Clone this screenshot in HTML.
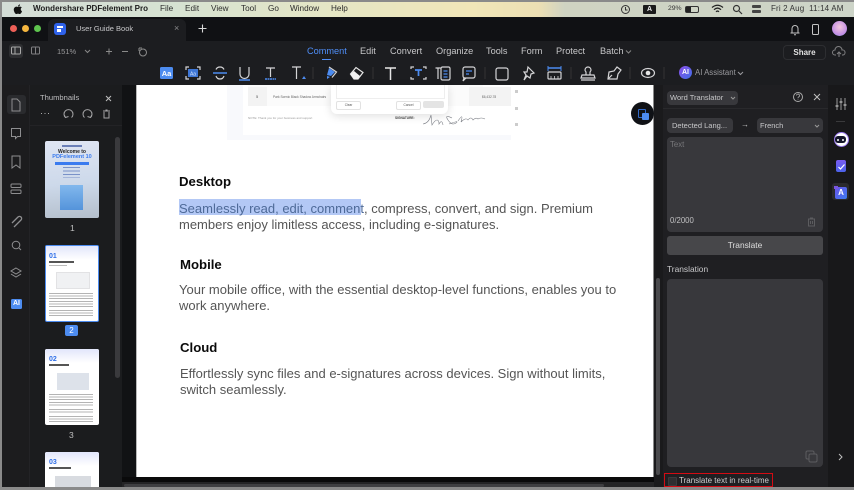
<!DOCTYPE html>
<html><head><meta charset="utf-8"><style>
html,body{margin:0;padding:0;background:#8a8a8a}
#r{position:relative;width:854px;height:490px;overflow:hidden;background:#8a8a8a;font-family:"Liberation Sans",sans-serif}
.a,.t{position:absolute}
.t{white-space:nowrap;line-height:1}
svg{position:absolute;overflow:visible}
.s{fill:none;stroke:#d4d4d6;stroke-width:1.2}
.i{fill:none;stroke:#8e8e90;stroke-width:1}
.b{color:#555;font-size:13px}
.h{color:#0a0a0a;font-size:13.2px;font-weight:bold}
.g{background:#38383c;border-radius:4px}
.m{color:#2c2c2c;font-size:8.2px;top:5px}
.n{color:#c6c6c8;font-size:9.2px;top:47px}
.l{background:repeating-linear-gradient(#b4b4b4 0 1px,#fff 1px 2.5px)}
</style></head><body><div id="r">
<!-- menu bar -->
<div class="a" style="left:2px;top:2px;width:852px;height:15px;background:linear-gradient(90deg,#d3dcd6 0,#d6e2d2 20%,#e6e6c4 40%,#f1e6b8 55%,#ecdfb4 63%,#cfd3c2 66%,#cdd4c8 100%)"></div>
<svg style="left:13px;top:4px" width="10" height="11" viewBox="0 0 10 11"><path d="M5 3C4 2.600 3 2.500 2.200 3 .8 3.800.5 5.500 1 7c.4 1.300 1.200 3 2.300 3 .6 0 1-.4 1.700-.4s1.100.4 1.700.4c1 0 1.900-1.500 2.300-2.800-1.500-.7-1.700-2.900-.2-3.800C8 2.500 6.300 2.400 5 3zM5 2.600C5 1.500 5.800.6 7 .4 7 1.700 6.200 2.600 5 2.600z" fill="#111"/></svg>
<div class="t" style="left:33px;top:5px;font-size:8px;font-weight:bold;color:#1c1c1c">Wondershare PDFelement Pro</div>
<div class="t m" style="left:160px">File</div><div class="t m" style="left:185px">Edit</div><div class="t m" style="left:211px">View</div><div class="t m" style="left:241px">Tool</div><div class="t m" style="left:268px">Go</div><div class="t m" style="left:290px">Window</div><div class="t m" style="left:331px">Help</div>
<svg style="left:620px;top:4px" width="11" height="11" viewBox="0 0 11 11"><circle cx="5.500" cy="5.500" r="4" fill="none" stroke="#333"/><path d="M5.500 3v3h2" fill="none" stroke="#333"/></svg>
<div class="a" style="left:643px;top:5px;width:13px;height:9px;background:#1a1a1a;border-radius:1px;color:#eee;font-size:7px;font-weight:bold;text-align:center;line-height:9px">A</div>
<div class="t" style="left:668px;top:6px;font-size:6.800px;color:#333">29%</div>
<div class="a" style="left:685px;top:6px;width:12px;height:5px;border:1px solid #333;border-radius:2px"><div style="width:5px;height:5px;background:#222"></div></div>
<svg style="left:711px;top:4px" width="13" height="10" viewBox="0 0 13 10"><path d="M1 3.500Q6.500 -1 12 3.500M3 5.700Q6.500 2.500 10 5.700M5 7.700Q6.500 6.500 8 7.700" fill="none" stroke="#222" stroke-width="1.300"/></svg>
<svg style="left:732px;top:4px" width="11" height="11" viewBox="0 0 11 11"><circle cx="4.500" cy="4.500" r="3" fill="none" stroke="#333" stroke-width="1.200"/><path d="M7 7l3 3" stroke="#333" stroke-width="1.200"/></svg>
<div class="a" style="left:752px;top:5px;width:9px;height:3px;background:#444;border-radius:1px"></div><div class="a" style="left:752px;top:10px;width:9px;height:3px;background:#444;border-radius:1px"></div>
<div class="t" style="left:771px;top:5px;font-size:8px;color:#333;letter-spacing:.15px">Fri 2 Aug&nbsp; 11:14 AM</div>
<!-- title bar -->
<div class="a" style="left:2px;top:17px;width:852px;height:24px;background:#101114"></div>
<div class="a" style="left:10px;top:25px;width:7px;height:7px;border-radius:50%;background:#ed5f57"></div>
<div class="a" style="left:22px;top:25px;width:7px;height:7px;border-radius:50%;background:#f4b63f"></div>
<div class="a" style="left:34px;top:25px;width:7px;height:7px;border-radius:50%;background:#5ec44e"></div>
<div class="a" style="left:48px;top:19px;width:138px;height:22px;background:#1c1d20;border-radius:6px 6px 0 0"></div>
<div class="a" style="left:54px;top:23px;width:12px;height:12px;background:#2f62ea;border-radius:3px"></div>
<div class="a" style="left:57px;top:26px;width:6px;height:2px;background:#fff"></div><div class="a" style="left:57px;top:29px;width:4px;height:3px;background:#fff"></div>
<div class="t" style="left:76px;top:25px;font-size:7.500px;color:#c8c8ca">User Guide Book</div>
<div class="t" style="left:174px;top:24px;font-size:9px;color:#8a8a8c">×</div>
<svg style="left:197px;top:23px" width="11" height="11" viewBox="0 0 11 11"><path d="M5.500 1.500v8M1.500 5.500h8" stroke="#d8d8d8" stroke-width="1.100"/></svg>
<svg style="left:789px;top:23px" width="12" height="13" viewBox="0 0 12 13"><path d="M1.500 10h9M3 10V5.500a3 3 0 0 1 6 0V10M5 11.700h2" fill="none" stroke="#c4c4c4" stroke-width="1"/></svg>
<div class="a" style="left:812px;top:24px;width:5px;height:9px;border:1px solid #c4c4c4;border-radius:1.500px"></div>
<div class="a" style="left:832px;top:21px;width:15px;height:15px;border-radius:50%;background:radial-gradient(circle at 50% 40%,#f4c8dc,#c38fe4 65%,#7fa6ea)"></div>
<!-- toolbar -->
<div class="a" style="left:2px;top:41px;width:852px;height:44px;background:#1c1d20"></div>
<div class="a" style="left:9px;top:44px;width:14px;height:14px;background:#2d2e31;border-radius:3px"></div>
<svg style="left:10px;top:46px" width="40" height="10" viewBox="0 0 40 10"><rect x="1.500" y="1" width="9" height="7" rx="1" fill="none" stroke="#a8a8a8"/><path d="M5 1v7" stroke="#a8a8a8"/><rect x="21.500" y="1" width="8" height="7" rx="1" fill="none" stroke="#808082"/><path d="M25.500 1v7" stroke="#808082"/></svg>
<div class="t" style="left:57px;top:47.500px;font-size:7.500px;color:#98989a">151%</div>
<svg style="left:84px;top:48px" width="70" height="11" viewBox="0 0 70 11"><path d="M1 2l2.500 2.500L6 2" fill="none" stroke="#888"/><path d="M22 3.500h6M25 .5v6M38 3.500h6" stroke="#8a8a8a"/><circle cx="59" cy="4.500" r="3.500" fill="none" stroke="#8a8a8a"/><path d="M55 0h3M55 0v3" stroke="#8a8a8a"/></svg>
<div class="t n" style="left:307px;color:#4f8ef7">Comment</div>
<div class="a" style="left:322px;top:59px;width:9px;height:1px;background:#4f8ef7"></div>
<div class="t n" style="left:360px">Edit</div><div class="t n" style="left:390px">Convert</div><div class="t n" style="left:436px">Organize</div><div class="t n" style="left:486px">Tools</div><div class="t n" style="left:521px">Form</div><div class="t n" style="left:556px">Protect</div><div class="t n" style="left:600px">Batch</div>
<svg style="left:625px;top:49px" width="8" height="6" viewBox="0 0 8 6"><path d="M1 1.500l2.500 2.500L6 1.500" fill="none" stroke="#888"/></svg>
<div class="a" style="left:783px;top:45px;width:41px;height:13px;border:1px solid #2d2e31;border-radius:4px;color:#e2e2e2;font-size:8px;font-weight:bold;text-align:center;line-height:13px">Share</div>
<svg style="left:832px;top:47px" width="14" height="11" viewBox="0 0 14 11"><path d="M4 8H3a2.500 2.500 0 0 1 0-5 3.500 3.500 0 0 1 7 0 2.500 2.500 0 0 1 1 5h-1M7 5v5M5 7l2-2 2 2" fill="none" stroke="#808082"/></svg>
<!-- tools -->
<svg style="left:155px;top:63px" width="510" height="22" viewBox="0 0 510 22">
<rect x="5" y="4" width="13" height="12" rx="1.500" fill="#4d8cf0"/>
<text x="11.500" y="13" font-size="7.500" font-weight="bold" text-anchor="middle" fill="#fff" font-family="Liberation Sans">Aa</text>
<rect x="33" y="6" width="10" height="8" fill="#3f77d6"/><text x="38" y="12.300" font-size="5" text-anchor="middle" fill="#cfe0fb" font-family="Liberation Sans">Aa</text><path d="M31 7V4h3M42 4h3v3M45 13v3h-3M34 16h-3v-3" class="s"/>
<path d="M58 10h14" stroke="#4d8cf0" stroke-width="1.500"/><path d="M69 6.500q-1-2.500-4-2.500t-4 2.500M61 13q1 3 4 3t4-3" class="s"/>
<path d="M85 4v7a4.500 4.500 0 0 0 9 0V4" class="s"/><path d="M84 17h11" stroke="#4d8cf0" stroke-width="1.500"/>
<path d="M111 5h9M115.500 5v9" class="s"/><path d="M110 16h11" stroke="#4d8cf0" stroke-width="1.600" stroke-dasharray="2 .5"/>
<path d="M137 4h9M141.500 4v12" class="s"/><path d="M147 16l2-3 2 3z" fill="#4d8cf0"/>
<path d="M174 5l6 4-4 4-4-1z" fill="#4d8cf0"/><path d="M172 13v3l3-2z" fill="#4d8cf0"/><path d="M174 4l7.500 5-4.500 5.500" class="s"/>
<path d="M195.500 11L201 4.500l7 5-5 6.500h-4z" fill="none" stroke="#e6e6e6" stroke-width="1.200"/><path d="M195.500 11l3.500 5h4l2-3-6-5z" fill="#f0f0f0"/>
<path d="M230 5h11M235.500 5v12" stroke="#e6e6e6" stroke-width="1.500" fill="none"/>
<path d="M256 6V4h3M268 4h3v2M271 14v2h-3M259 16h-3v-2" class="s"/><path d="M260 7h7M263.500 7v6" stroke="#4d8cf0" stroke-width="1.700"/>
<path d="M280.500 5h5M283 5v11" class="s"/><rect x="286" y="4" width="9" height="13" rx="1.500" class="s"/><path d="M288.500 8h4M288.500 11h4M288.500 14h4" stroke="#4d8cf0" stroke-width="1.300"/>
<rect x="308" y="4" width="12" height="11" rx="2" class="s"/><path d="M311 8h6M311 11h3" stroke="#4d8cf0" stroke-width="1.300"/><path d="M309 15l-1 3 3-3" class="s"/>
<rect x="341" y="5" width="12" height="12" rx="2" class="s"/>
<path d="M373 4l6 6-3 1-1 4-3-2-3 4 2-5-2-3 3 0z" class="s"/>
<path d="M393 3v5M406 3v5" stroke="#4d8cf0"/><path d="M393 5h13" stroke="#4d8cf0" stroke-width="1.500"/><rect x="393" y="9" width="13" height="7" rx="1" class="s"/><path d="M396 13v3M399.500 13v3M403 13v3" stroke="#d4d4d6" stroke-width=".8"/>
<path d="M427 12h12l1 3h-14zM431 12V9q-1-1-1-2a3 3 0 0 1 6 0q0 1-1 2v3M426 17h14" class="s"/>
<path d="M453 16l1-7 5-1 3-4 4 3-3 4-1 5z" class="s"/><path d="M453 16l4-4" class="s"/>
<ellipse cx="493" cy="10" rx="6.500" ry="4.500" class="s"/><circle cx="493" cy="10" r="2.300" fill="#e6e6e6"/>
<path d="M158 4v12M218 4v12M330 4v12M416 4v12M475 4v12M509 4v12" stroke="#333"/>
</svg>
<div class="a" style="left:679px;top:66px;width:13px;height:13px;border-radius:50%;background:linear-gradient(135deg,#8d4fe8,#3f6fe8);color:#fff;font-size:7px;font-weight:bold;text-align:center;line-height:13px">AI</div>
<div class="t" style="left:695px;top:69px;font-size:7.800px;color:#9a9a9e">AI Assistant</div>
<svg style="left:737px;top:71px" width="7" height="5" viewBox="0 0 7 5"><path d="M1 1l2.500 2.500L6 1" fill="none" stroke="#9a9a9e"/></svg>
<!-- left rail -->
<div class="a" style="left:2px;top:85px;width:27px;height:402px;background:#1c1c1e"></div>
<div class="a" style="left:29px;top:85px;width:93px;height:402px;background:#1b1c1e;border-left:1px solid #232326"></div>
<div class="a" style="left:30px;top:125px;width:92px;height:1px;background:#232326"></div>
<div class="a" style="left:122px;top:85px;width:14px;height:402px;background:#111214"></div>
<div class="a" style="left:7px;top:95px;width:19px;height:19px;background:#2a2b2e;border-radius:3px"></div>
<svg style="left:8px;top:96px" width="16" height="230" viewBox="0 0 16 230">
<path d="M4 3h5l3 3v9H4z" class="i" stroke="#a0a0a2"/>
<path d="M3.500 32.500h9v8H9.500l-2 2v-2h-4z" class="i"/>
<path d="M4 60h8v12l-4-3-4 3z" class="i"/>
<rect x="3" y="88" width="10" height="3.500" rx="1" class="i"/><rect x="3" y="94" width="10" height="3.500" rx="1" class="i"/>
<path d="M4 127l6-6a2 2 0 0 1 3 3l-7 7" class="i" style="stroke-width:1.300"/>
<circle cx="8" cy="149" r="3.800" class="i"/><path d="M11 152l2 2" class="i"/>
<path d="M8 172l5 3-5 3-5-3zM3 178l5 3 5-3" class="i"/>
</svg>
<div class="a" style="left:11px;top:299px;width:11px;height:10px;background:#4d8cf0;border-radius:1.500px;color:#fff;font-size:7px;font-weight:bold;text-align:center;line-height:10px">AI</div>
<!-- thumbs header -->
<div class="t" style="left:40px;top:93.500px;font-size:7.600px;color:#bdbdbf">Thumbnails</div>
<svg style="left:38px;top:92px" width="80" height="28" viewBox="0 0 80 28"><path d="M68 4l5 5M73 4l-5 5" stroke="#c0c0c0"/><path d="M3 21.500h1M6.500 21.500h1M10 21.500h1" stroke="#aaa"/><path d="M27.500 25.500A4.500 4.500 0 1 1 33.500 25.500M26 22.500l1.500 3 3-1" fill="none" stroke="#a4a4a6"/><path d="M46.500 25.500A4.500 4.500 0 1 1 52.500 25.500M54 22.500l-1.500 3-3-1" fill="none" stroke="#a4a4a6"/><path d="M65 19h7M66 20v6h5v-6M67.500 18h2" fill="none" stroke="#a4a4a6"/></svg>
<!-- thumb 1 -->
<div class="a" style="left:45px;top:141px;width:54px;height:77px;border-radius:2px;background:linear-gradient(175deg,#dfe5f3,#cdd9ea 55%,#b4bfcc);overflow:hidden">
<div class="a" style="left:17px;top:4px;width:20px;height:2px;background:#6a7fb8"></div>
<div class="a" style="left:15px;top:44px;width:23px;height:25px;background:linear-gradient(#6fb0ee,#3b87dc);opacity:.8"></div>
<div class="a" style="left:18px;top:26px;width:17px;height:11px;background:repeating-linear-gradient(#7a92c8 0 1px,transparent 1px 3.500px)"></div>
<div class="a" style="left:10px;top:21px;width:34px;height:2.500px;background:#3a7bef"></div>
<div class="t" style="left:0;width:54px;text-align:center;top:8.500px;font-size:5px;font-weight:bold;color:#222">Welcome to</div>
<div class="t" style="left:0;width:54px;text-align:center;top:14px;font-size:5.500px;font-weight:bold;color:#3a7bef">PDFelement 10</div>
</div>
<div class="t" style="left:70px;top:224px;font-size:8.500px;color:#c0c0c0">1</div>
<!-- thumb 2 -->
<div class="a" style="left:45px;top:245px;width:52px;height:75px;background:#fff;border:1px solid #4d8cf0;border-radius:2px;overflow:hidden">
<div style="height:14px;background:linear-gradient(#e2e6fb,#fff)"></div>
<div class="t" style="left:3px;top:7px;font-size:7px;font-weight:bold;color:#2f6fe8">01</div>
<div class="a" style="left:3px;top:15px;width:25px;height:2px;background:#555"></div>
<div class="a" style="left:3px;top:19px;width:18px;height:1px;background:#bbb"></div>
<div class="a" style="left:10px;top:26px;width:34px;height:17px;background:#f0f1f3;border:1px solid #e2e2e4;box-sizing:border-box"></div>
<div class="a l" style="left:3px;top:47px;width:44px;height:6px"></div>
<div class="a l" style="left:3px;top:55px;width:44px;height:6px"></div>
<div class="a l" style="left:3px;top:64px;width:44px;height:6px"></div>
</div>
<div class="a" style="left:65px;top:325px;width:13px;height:11px;background:#4d8cf0;border-radius:2px;color:#fff;font-size:8px;text-align:center;line-height:11px">2</div>
<!-- thumb 3 -->
<div class="a" style="left:45px;top:349px;width:54px;height:76px;background:#fff;border-radius:2px;overflow:hidden">
<div style="height:14px;background:linear-gradient(#e2e6fb,#fff)"></div>
<div class="t" style="left:4px;top:7px;font-size:7px;font-weight:bold;color:#2f6fe8">02</div>
<div class="a" style="left:4px;top:15px;width:20px;height:2px;background:#555"></div>
<div class="a" style="left:12px;top:24px;width:32px;height:17px;background:#dde2ea"></div>
<div class="a l" style="left:4px;top:45px;width:44px;height:6px"></div>
<div class="a l" style="left:4px;top:53px;width:44px;height:4px"></div>
<div class="a l" style="left:4px;top:60px;width:44px;height:4px"></div>
<div class="a l" style="left:4px;top:67px;width:44px;height:6px"></div>
</div>
<div class="t" style="left:69px;top:431px;font-size:8.500px;color:#c0c0c0">3</div>
<!-- thumb 4 -->
<div class="a" style="left:45px;top:452px;width:54px;height:35px;background:#fff;border-radius:2px 2px 0 0;overflow:hidden">
<div style="height:14px;background:linear-gradient(#e2e6fb,#fff)"></div>
<div class="t" style="left:4px;top:7px;font-size:7px;font-weight:bold;color:#2f6fe8">03</div>
<div class="a" style="left:4px;top:15px;width:22px;height:2px;background:#555"></div>
<div class="a" style="left:10px;top:24px;width:36px;height:11px;background:#d8dbe0"></div>
</div>
<div class="a" style="left:115px;top:137px;width:5px;height:241px;background:#3a3a3d;border-radius:3px"></div>
<!-- page -->
<div class="a" style="left:136px;top:85px;width:517px;height:392px;background:#fff"></div>
<div class="a" style="left:136px;top:85px;width:1px;height:392px;background:#b8b8b8"></div>
<div class="a" style="left:122px;top:477px;width:532px;height:5px;background:#0a0a0b"></div>
<div class="a" style="left:122px;top:482px;width:532px;height:5px;background:#242426"></div>
<div class="a" style="left:124px;top:484px;width:480px;height:3px;background:#3f3f42;border-radius:2px"></div>
<div class="a" style="left:227px;top:85px;width:284px;height:55px;background:#f8f9fc"></div>
<div class="a" style="left:243px;top:85px;width:268px;height:50px;background:#fff"></div>
<div class="a" style="left:248px;top:85px;width:235px;height:21px;background:#fbfbfb"></div>
<div class="a" style="left:248px;top:87px;width:19px;height:19px;background:#f3f3f3"></div>
<div class="a" style="left:469px;top:87px;width:42px;height:19px;background:#f3f3f3"></div>
<div class="t" style="left:256px;top:95px;font-size:4px;color:#555">5</div>
<div class="t" style="left:273px;top:96px;font-size:3.200px;color:#666">Park Scenic Black Shadow Armchairs</div>
<div class="t" style="left:482px;top:96px;font-size:3.200px;color:#666">$6,432.78</div>
<div class="a" style="left:331px;top:85px;width:117px;height:29px;background:#fff;border-radius:0 0 6px 6px;box-shadow:0 2px 9px rgba(0,0,0,.13)"></div>
<div class="a" style="left:336px;top:85px;width:107px;height:13px;border:1px solid #eee;border-top:0"></div>
<div class="a" style="left:336px;top:101px;width:23px;height:7px;border:.5px solid #e2e2e2;border-radius:2px;font-size:3.200px;color:#555;text-align:center;line-height:7px">Clear</div>
<div class="a" style="left:396px;top:101px;width:23px;height:7px;border:.5px solid #e2e2e2;border-radius:2px;font-size:3.200px;color:#555;text-align:center;line-height:7px">Cancel</div>
<div class="a" style="left:423px;top:101px;width:21px;height:7px;background:#e4e4e4;border-radius:2px"></div>
<div class="t" style="left:248px;top:117px;font-size:3px;color:#999">NOTE: Thank you for your business and support</div>
<div class="t" style="left:395px;top:117px;font-size:3.200px;font-weight:bold;color:#444">SIGNATURE:</div>
<svg style="left:422px;top:110px" width="66" height="20" viewBox="0 0 66 20"><path d="M1 14q6-1 8-9l1 10q3-5 5-5t2 4q3-5 4 1M30 8q-8-4-4 2t8 3-7 1M36 11q6-9 3 1 5-5 7-2 3-4 5 0 3-3 5-1 3-2 7 0" fill="none" stroke="#7a7d84" stroke-width=".6"/></svg>
<div class="a" style="left:515px;top:90px;width:3px;height:3px;background:#ccc"></div><div class="a" style="left:515px;top:107px;width:3px;height:3px;background:#ccc"></div><div class="a" style="left:515px;top:123px;width:3px;height:3px;background:#ccc"></div>
<!-- float -->
<div class="a" style="left:631px;top:102px;width:23px;height:23px;border-radius:50%;background:#101216"></div>
<div class="a" style="left:638px;top:109px;width:6px;height:7px;border:1px solid #3269c8;border-radius:1px"></div>
<div class="a" style="left:642px;top:113px;width:7px;height:7px;background:#4d8cf0;border-radius:1px"></div>
<!-- doc text -->
<div class="t h" style="left:179px;top:174.500px">Desktop</div>
<div class="a" style="left:179px;top:199px;width:182px;height:15.500px;background:#b3c8f5"></div>
<div class="t b" style="left:179px;top:201.500px"><span style="color:#4e6a98">Seamlessly read, edit, comment</span>, compress, convert, and sign. Premium</div>
<div class="t b" style="left:179px;top:217.500px">members enjoy limitless access, including e-signatures.</div>
<div class="t h" style="left:180px;top:257.500px">Mobile</div>
<div class="t b" style="left:179px;top:282.500px">Your mobile office, with the essential desktop-level functions, enables you to</div>
<div class="t b" style="left:179px;top:298.500px">work anywhere.</div>
<div class="t h" style="left:180px;top:340.500px">Cloud</div>
<div class="t b" style="left:180px;top:366.500px">Effortlessly sync files and e-signatures across devices. Sign without limits,</div>
<div class="t b" style="left:180px;top:382.500px">switch seamlessly.</div>
<!-- right panel -->
<div class="a" style="left:654px;top:85px;width:174px;height:402px;background:#1f1f22"></div>
<div class="a" style="left:654px;top:85px;width:9px;height:402px;background:#1a1a1c"></div>
<div class="a" style="left:828px;top:85px;width:26px;height:402px;background:#18181a"></div>
<div class="a" style="left:656px;top:278px;width:4px;height:197px;background:#4a4a4d;border-radius:2px"></div>
<div class="a" style="left:663px;top:108px;width:165px;height:1px;background:#29292c"></div>
<div class="a g" style="left:667px;top:91px;width:71px;height:14px"></div>
<div class="t" style="left:670px;top:94px;font-size:7.500px;color:#c8c8ca">Word Translator</div>
<svg style="left:730px;top:96px" width="7" height="5" viewBox="0 0 7 5"><path d="M1 1l2 2 2-2" fill="none" stroke="#999"/></svg>
<svg style="left:792px;top:90px" width="32" height="14" viewBox="0 0 32 14"><circle cx="6" cy="7" r="4.500" fill="none" stroke="#aaa"/><path d="M4.500 5.500a1.500 1.500 0 1 1 2 1.500l-.5.700v.6M6 9.500v.5" fill="none" stroke="#aaa" stroke-width=".8"/><path d="M22 4l6 6M28 4l-6 6" stroke="#c0c0c0"/></svg>
<div class="a g" style="left:667px;top:118px;width:66px;height:15px"></div>
<div class="t" style="left:672px;top:122px;font-size:7.500px;color:#c8c8ca">Detected Lang...</div>
<div class="t" style="left:741px;top:121px;font-size:8px;color:#c4c4c4">→</div>
<div class="a g" style="left:757px;top:118px;width:66px;height:15px"></div>
<div class="t" style="left:760px;top:122px;font-size:7.500px;color:#c8c8ca">French</div>
<svg style="left:814px;top:124px" width="7" height="5" viewBox="0 0 7 5"><path d="M1 1l2 2 2-2" fill="none" stroke="#999"/></svg>
<div class="a g" style="left:667px;top:137px;width:156px;height:95px"></div>
<div class="t" style="left:670px;top:141px;font-size:7.800px;color:#77777a">Text</div>
<div class="t" style="left:670px;top:217px;font-size:7.800px;color:#c0c0c2">0/2000</div>
<svg style="left:807px;top:217px" width="9" height="10" viewBox="0 0 9 10"><path d="M1.500 2h6v7h-6zM3 1h3M3.500 4v3M5.500 4v3" fill="none" stroke="#5c5c5f"/></svg>
<div class="a" style="left:667px;top:236px;width:156px;height:19px;background:#47474a;border-radius:3px;color:#dedede;font-size:8.400px;text-align:center;line-height:19px">Translate</div>
<div class="t" style="left:667px;top:265px;font-size:8.400px;color:#c8c8ca">Translation</div>
<div class="a g" style="left:667px;top:279px;width:156px;height:188px"></div>
<svg style="left:805px;top:450px" width="13" height="13" viewBox="0 0 13 13"><rect x="1" y="1" width="8" height="8" rx="1.500" fill="none" stroke="#5c5c5f"/><rect x="4" y="4" width="8" height="8" rx="1.500" fill="#38383c" stroke="#5c5c5f"/></svg>
<div class="a" style="left:664px;top:473px;width:107px;height:11.500px;border:1.500px solid #d40b13"></div>
<div class="a" style="left:668px;top:477px;width:7px;height:7px;background:#2e2e31;border:1px solid #3a3a3d;border-radius:1px"></div>
<div class="t" style="left:679px;top:477px;font-size:8px;color:#cfcfd1">Translate text in real-time</div>
<!-- right strip -->
<svg style="left:834px;top:97px" width="14" height="14" viewBox="0 0 14 14"><path d="M3 1v12M7 1v12M11 1v12" stroke="#bbb" stroke-width=".8"/><path d="M1.500 9h3M5.500 5h3M9.500 8h3" stroke="#bbb" stroke-width="1.300"/></svg>
<div class="a" style="left:836px;top:121px;width:9px;height:1px;background:#3a3a3c"></div>
<div class="a" style="left:834px;top:132px;width:13px;height:13px;border-radius:50%;background:#fff;border:1px solid #9c7cf0"></div>
<div class="a" style="left:835px;top:136px;width:11px;height:7px;border-radius:3px;background:#14152a"></div>
<div class="a" style="left:837px;top:139px;width:2px;height:2px;background:#fff;border-radius:1px"></div><div class="a" style="left:842px;top:139px;width:2px;height:2px;background:#fff;border-radius:1px"></div>
<div class="a" style="left:836px;top:160px;width:10px;height:12px;background:linear-gradient(#7a5cf0,#4b62ea);border-radius:2px"></div>
<svg style="left:837px;top:162px" width="9" height="9" viewBox="0 0 9 9"><path d="M1.500 5l2 2 4-4.500" fill="none" stroke="#fff" stroke-width="1.200"/></svg>
<div class="a" style="left:832px;top:183px;width:17px;height:17px;background:#2a2a2d;border-radius:3px"></div>
<div class="a" style="left:835px;top:187px;width:12px;height:12px;background:linear-gradient(135deg,#6a55ea,#3d7bf0);border-radius:2px;color:#fff;font-size:8px;font-weight:bold;text-align:center;line-height:12px">A</div>
<div class="a" style="left:834px;top:186px;width:4px;height:3px;background:#7a55e0"></div>
<svg style="left:837px;top:453px" width="7" height="8" viewBox="0 0 7 8"><path d="M2 1l3 3-3 3" fill="none" stroke="#c0c0c0"/></svg>
</div></body></html>
